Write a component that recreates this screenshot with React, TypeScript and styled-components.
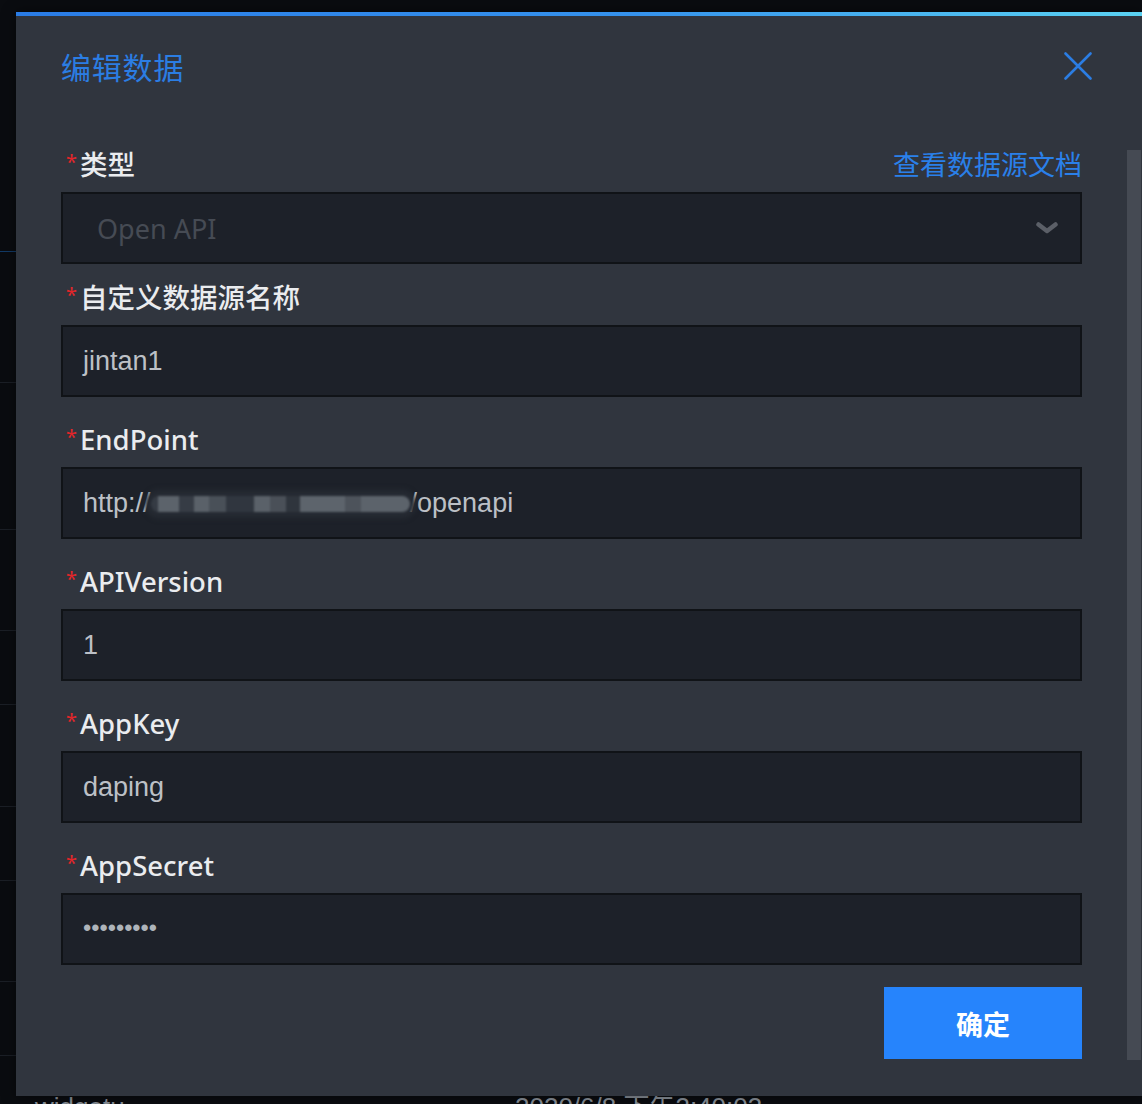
import React from "react";
import styled, { createGlobalStyle } from "styled-components";

const GlobalStyle = createGlobalStyle`
  html, body { margin: 0; padding: 0; background: #0a0c10; }
  body {
    width: 1142px;
    height: 1104px;
    overflow: hidden;
    font-family: "Noto Sans", "Noto Sans CJK SC", sans-serif;
  }
  * { box-sizing: border-box; }
`;

const Page = styled.div`
  position: relative;
  width: 1142px;
  height: 1104px;
  overflow: hidden;
  background: #0a0c10;
`;

const Backdrop = styled.div`
  display: flex;
  flex-direction: column;
`;

const BackRow = styled.div<{ $h: number; $accent?: boolean }>`
  height: ${(p) => p.$h}px;
  flex-shrink: 0;
  border-bottom: 1px solid ${(p) => (p.$accent ? "#123a66" : "#1b1f26")};
`;

const BackTextRow = styled.div`
  display: flex;
  padding: 36px 0 0 35px;
  font-family: "Liberation Sans", "Noto Sans CJK SC", sans-serif;
  font-size: 26px;
  line-height: 30px;
  color: #8b929b;
`;

const BackCell = styled.span<{ $w?: number }>`
  width: ${(p) => (p.$w ? `${p.$w}px` : "auto")};
  flex-shrink: 0;
`;

const Modal = styled.div`
  position: absolute;
  left: 16px;
  top: 12px;
  width: 1126px;
  height: 1084px;
  background: #30353e;
  display: flex;
  flex-direction: column;
  box-shadow: 0 0 12px rgba(0, 0, 0, 0.5);
`;

const TopBar = styled.div`
  height: 4px;
  flex-shrink: 0;
  background: linear-gradient(90deg, #2a7ce6 0%, #3592ec 55%, #5ad2f2 100%);
`;

const Header = styled.div`
  height: 100px;
  flex-shrink: 0;
  display: flex;
  align-items: center;
  justify-content: space-between;
  padding: 0 50px 0 45px;
`;

const Title = styled.h2`
  margin: 0;
  font-family: "Noto Sans CJK SC", sans-serif;
  font-weight: 400;
  font-size: 30px;
  color: #2b7de3;
  letter-spacing: 0.8px;
`;

const CloseButton = styled.button`
  width: 28px;
  height: 28px;
  padding: 0;
  border: none;
  background: none;
  display: flex;
  cursor: pointer;
`;

const Body = styled.div`
  flex: 1;
  display: flex;
  padding-left: 45px;
`;

const Form = styled.div`
  width: 1021px;
  padding-top: 18px;
  display: flex;
  flex-direction: column;
`;

const ScrollThumb = styled.div`
  margin: 34px 1px 0 auto;
  width: 14px;
  height: 910px;
  background: #454a53;
`;

const Field = styled.div<{ $gap: number }>`
  display: flex;
  flex-direction: column;
  margin-bottom: ${(p) => p.$gap}px;
`;

const LabelRow = styled.div`
  height: 58px;
  display: flex;
  align-items: center;
  justify-content: space-between;
`;

const Label = styled.label`
  display: block;
  font-family: "Noto Sans", "Noto Sans CJK SC", sans-serif;
  font-size: 27.5px;
  font-weight: 500;
  line-height: 38px;
  color: #eaecef;
`;

const Required = styled.span`
  color: #e3262a;
  font-size: 20px;
  font-weight: 400;
  vertical-align: 6px;
  margin: 0 3px 0 5px;
`;

const DocLink = styled.a`
  font-family: "Noto Sans CJK SC", sans-serif;
  font-size: 27px;
  color: #2a80ea;
  text-decoration: none;
`;

const InputBox = styled.div<{ $select?: boolean }>`
  height: 72px;
  border: 2px solid #101317;
  background: #1d2129;
  display: flex;
  align-items: center;
  justify-content: space-between;
  padding: 0 ${(p) => (p.$select ? "22px" : "20px")} 0 ${(p) => (p.$select ? "34px" : "20px")};
  font-family: "Liberation Sans", "Noto Sans CJK SC", sans-serif;
  font-size: 27px;
  color: #bcc0c6;
  white-space: nowrap;
`;

const Placeholder = styled.span`
  font-family: "Noto Sans", sans-serif;
  font-size: 27px;
  color: #464b54;
`;

const Dots = styled.span`
  display: inline-block;
  font-size: 23.5px;
  color: #aeb4ba;
  transform: translateY(-2px);
`;

const Redaction = styled.span`
  display: inline-block;
  width: 259px;
  height: 16px;
  vertical-align: middle;
  border-radius: 8px;
  filter: blur(0.8px);
  box-shadow: 0 0 5px 6px #262b33;
  background: linear-gradient(
    90deg,
    #353b44 0 7px,
    #5c636b 7px 28px,
    #363c45 28px 43px,
    #5a6169 43px 58px,
    #495058 58px 75px,
    #30363f 75px 103px,
    #5a6169 103px 119px,
    #4a5058 119px 135px,
    #2f353d 135px 149px,
    #5d646c 149px 194px,
    #4d535b 194px 210px,
    #5c636b 210px 259px
  );
`;

const Footer = styled.div`
  display: flex;
  justify-content: flex-end;
  margin-top: 22px;
`;

const PrimaryButton = styled.button`
  width: 198px;
  height: 72px;
  border: none;
  background: #2684fc;
  color: #ffffff;
  font-family: "Noto Sans CJK SC", sans-serif;
  font-weight: 700;
  font-size: 27px;
  cursor: pointer;
`;

const backRows: { h: number; accent?: boolean }[] = [
  { h: 252, accent: true },
  { h: 131 },
  { h: 147 },
  { h: 101 },
  { h: 74 },
  { h: 102 },
  { h: 74 },
  { h: 101 },
  { h: 74 },
];

type FieldDef = {
  label: string;
  value: React.ReactNode;
  gap: number;
};

const fields: FieldDef[] = [
  { label: "自定义数据源名称", value: "jintan1", gap: 12 },
  {
    label: "EndPoint",
    value: (
      <>
        http://
        <Redaction aria-hidden="true" />
        /openapi
      </>
    ),
    gap: 12,
  },
  { label: "APIVersion", value: "1", gap: 12 },
  { label: "AppKey", value: "daping", gap: 12 },
  { label: "AppSecret", value: <Dots>•••••••••</Dots>, gap: 0 },
];

export default function App() {
  return (
    <Page>
      <GlobalStyle />
      <Backdrop>
        {backRows.map((r, i) => (
          <BackRow key={i} $h={r.h} $accent={r.accent} />
        ))}
        <BackTextRow>
          <BackCell $w={480}>widgetu</BackCell>
          <BackCell>2020/6/8 下午3:40:03</BackCell>
        </BackTextRow>
      </Backdrop>

      <Modal>
        <TopBar />
        <Header>
          <Title>编辑数据</Title>
          <CloseButton aria-label="关闭">
            <svg width="28" height="28" viewBox="0 0 28 28">
              <path
                d="M1.5 1.5 L26.5 26.5 M26.5 1.5 L1.5 26.5"
                stroke="#2b7de3"
                strokeWidth="2.6"
                strokeLinecap="round"
              />
            </svg>
          </CloseButton>
        </Header>
        <Body>
          <Form>
            <Field $gap={3}>
              <LabelRow>
                <Label>
                  <Required>*</Required>类型
                </Label>
                <DocLink href="#">查看数据源文档</DocLink>
              </LabelRow>
              <InputBox $select>
                <Placeholder>Open API</Placeholder>
                <svg width="22" height="12" viewBox="0 0 22 12">
                  <path
                    d="M2.5 2.5 L11 9 L19.5 2.5"
                    fill="none"
                    stroke="#5b5f67"
                    strokeWidth="4.5"
                    strokeLinejoin="round"
                    strokeLinecap="round"
                  />
                </svg>
              </InputBox>
            </Field>
            {fields.map((f) => (
              <Field key={f.label} $gap={f.gap}>
                <LabelRow>
                  <Label>
                    <Required>*</Required>
                    {f.label}
                  </Label>
                </LabelRow>
                <InputBox>
                  <span>{f.value}</span>
                </InputBox>
              </Field>
            ))}
            <Footer>
              <PrimaryButton>确定</PrimaryButton>
            </Footer>
          </Form>
          <ScrollThumb />
        </Body>
      </Modal>
    </Page>
  );
}
